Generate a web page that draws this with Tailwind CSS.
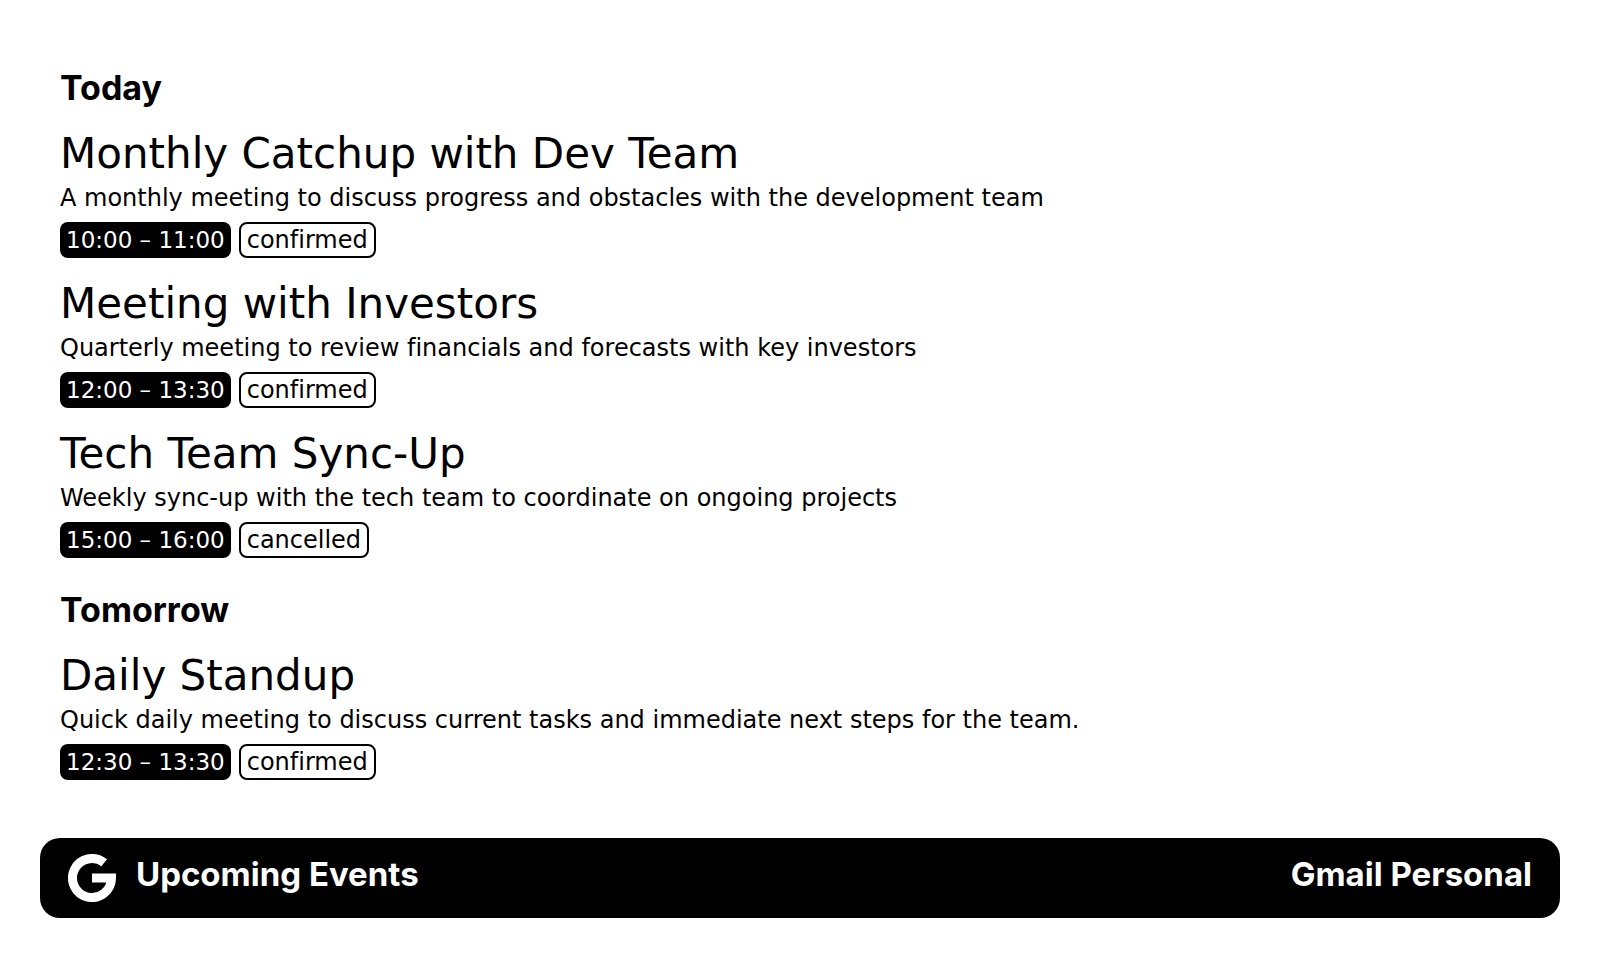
<!DOCTYPE html>
<html lang="en">
<head>
<meta charset="utf-8">
<meta name="viewport" content="width=device-width, initial-scale=1">
<title>Upcoming Events</title>
<script src="https://cdn.jsdelivr.net/npm/@tailwindcss/browser@4"></script>
</head>
<body class="flex min-h-screen flex-col bg-white px-10 pb-10 pt-[68px] font-['DejaVu_Sans',sans-serif] text-black [font-variant-ligatures:none]">
<main class="flex grow flex-col gap-8 px-5">
  <section class="flex flex-col gap-[22px]">
    <h2 class="font-['Inter',sans-serif] text-[34px] leading-10 font-bold">Today</h2>
    <article>
      <h3 class="text-[42px] leading-[48px]">Monthly Catchup with Dev Team</h3>
      <p class="text-[24px] leading-10">A monthly meeting to discuss progress and obstacles with the development team</p>
      <div class="mt-1 flex gap-2 leading-9">
        <time class="rounded-lg bg-black px-[6px] text-[23px] text-white">10:00 – 11:00</time>
        <span class="rounded-lg border-2 border-black px-[6px] text-[24px] leading-8">confirmed</span>
      </div>
    </article>
    <article>
      <h3 class="text-[42px] leading-[48px]">Meeting with Investors</h3>
      <p class="text-[24px] leading-10">Quarterly meeting to review financials and forecasts with key investors</p>
      <div class="mt-1 flex gap-2 leading-9">
        <time class="rounded-lg bg-black px-[6px] text-[23px] text-white">12:00 – 13:30</time>
        <span class="rounded-lg border-2 border-black px-[6px] text-[24px] leading-8">confirmed</span>
      </div>
    </article>
    <article>
      <h3 class="text-[42px] leading-[48px]">Tech Team Sync-Up</h3>
      <p class="text-[24px] leading-10">Weekly sync-up with the tech team to coordinate on ongoing projects</p>
      <div class="mt-1 flex gap-2 leading-9">
        <time class="rounded-lg bg-black px-[6px] text-[23px] text-white">15:00 – 16:00</time>
        <span class="rounded-lg border-2 border-black px-[6px] text-[24px] leading-8">cancelled</span>
      </div>
    </article>
  </section>
  <section class="flex flex-col gap-[22px]">
    <h2 class="font-['Inter',sans-serif] text-[34px] leading-10 font-bold">Tomorrow</h2>
    <article>
      <h3 class="text-[42px] leading-[48px]">Daily Standup</h3>
      <p class="text-[24px] leading-10">Quick daily meeting to discuss current tasks and immediate next steps for the team.</p>
      <div class="mt-1 flex gap-2 leading-9">
        <time class="rounded-lg bg-black px-[6px] text-[23px] text-white">12:30 – 13:30</time>
        <span class="rounded-lg border-2 border-black px-[6px] text-[24px] leading-8">confirmed</span>
      </div>
    </article>
  </section>
</main>
<footer class="flex h-20 shrink-0 items-center gap-5 rounded-[20px] bg-black px-7 font-['Inter',sans-serif] text-[33px] leading-10 font-bold text-white">
  <svg class="size-12 shrink-0" viewBox="0 0 48 48" fill="none" stroke="#fff" stroke-width="9" aria-hidden="true"><path d="M36.2 8.8A19.5 19.5 0 1 0 43.5 24H24" stroke-linejoin="miter"/></svg>
  <h1 class="grow pb-2">Upcoming Events</h1>
  <span class="pb-2">Gmail Personal</span>
</footer>
</body>
</html>
